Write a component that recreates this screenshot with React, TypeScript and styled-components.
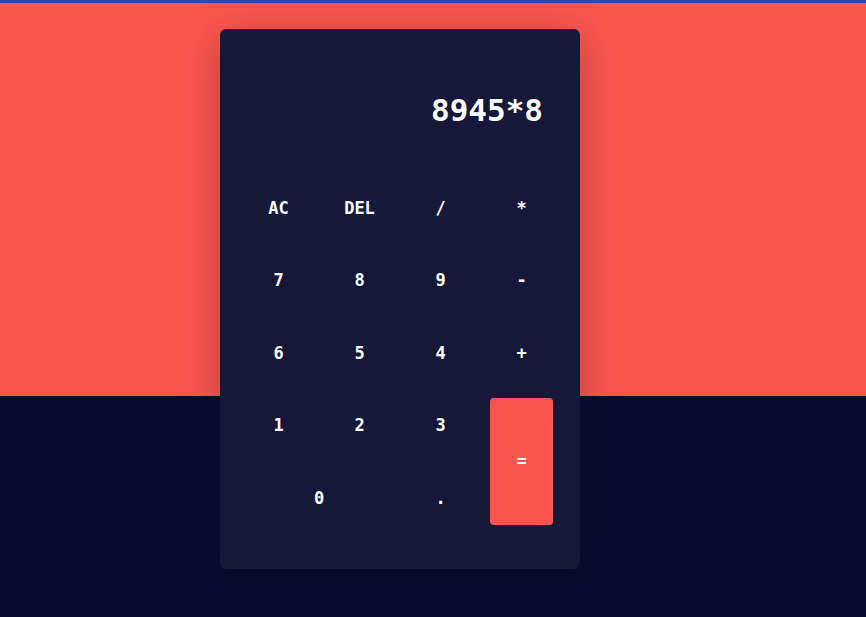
import React, { useState } from "react";
import styled, { createGlobalStyle } from "styled-components";

const Global = createGlobalStyle`
  html, body { margin: 0; padding: 0; }
  body { font-family: "DejaVu Sans Mono", "Liberation Mono", monospace; }
`;

const Page = styled.div`
  width: 100vw;
  height: 617px;
  box-sizing: border-box;
  border-top: 3px solid #3843aa;
  background: linear-gradient(to bottom, #f9554f 0, #f9554f 393px, #080b30 393px, #080b30 100%);
  display: flex;
  justify-content: flex-start;
  align-items: flex-start;
  padding-left: 220px;
  overflow: hidden;
`;

const Card = styled.div`
  margin-top: 26px;
  width: 360px;
  height: 540px;
  box-sizing: border-box;
  background: #151839;
  border-radius: 6px;
  box-shadow: 0 8px 40px rgba(0, 0, 0, 0.22);
  display: flex;
  flex-direction: column;
  padding: 0 27px 44px;
`;

const Display = styled.div`
  height: 151px;
  display: flex;
  align-items: center;
  justify-content: flex-end;
  padding-right: 10px;
  padding-top: 10px;
  box-sizing: border-box;
  color: #ffffff;
  font-family: "DejaVu Sans Mono", monospace;
  font-size: 31px;
  font-weight: 600;
`;

const Keys = styled.div`
  display: grid;
  grid-template-columns: repeat(4, 63px);
  grid-auto-rows: 55px;
  column-gap: 18px;
  row-gap: 17.5px;
`;

const Key = styled.button<{ $span?: number; $rows?: number; $accent?: boolean }>`
  grid-column: span ${(p) => p.$span ?? 1};
  grid-row: span ${(p) => p.$rows ?? 1};
  border: none;
  border-radius: 4px;
  background: ${(p) => (p.$accent ? "#f9554f" : "transparent")};
  color: #ffffff;
  font-family: "DejaVu Sans Mono", monospace;
  font-weight: bold;
  font-size: 17px;
  display: flex;
  align-items: center;
  justify-content: center;
  padding: 0;
  cursor: pointer;
`;

export default function App() {
  const [value] = useState("8945*8");
  return (
    <>
      <Global />
      <Page>
        <Card>
          <Display>{value}</Display>
          <Keys>
            <Key>AC</Key>
            <Key>DEL</Key>
            <Key>/</Key>
            <Key>*</Key>
            <Key>7</Key>
            <Key>8</Key>
            <Key>9</Key>
            <Key>-</Key>
            <Key>6</Key>
            <Key>5</Key>
            <Key>4</Key>
            <Key>+</Key>
            <Key>1</Key>
            <Key>2</Key>
            <Key>3</Key>
            <Key $rows={2} $accent>=</Key>
            <Key $span={2}>0</Key>
            <Key>.</Key>
          </Keys>
        </Card>
      </Page>
    </>
  );
}
